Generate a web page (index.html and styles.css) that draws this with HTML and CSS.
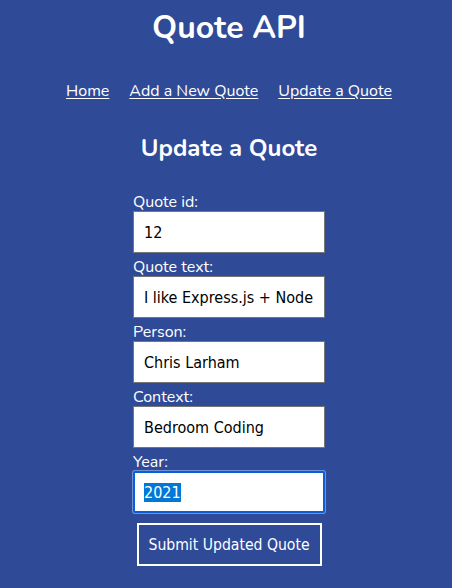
FILE: index.html
```html
<!DOCTYPE html>
<html lang="en">
<head>
<meta charset="utf-8">
<title>Quote API</title>
<link rel="stylesheet" href="styles.css">
</head>
<body>
<header class="header">
  <h1 class="title">Quote API</h1>
  <nav class="nav">
    <a href="#" class="nav-link">Home</a>
    <a href="#" class="nav-link">Add a New Quote</a>
    <a href="#" class="nav-link">Update a Quote</a>
  </nav>
</header>
<main class="main">
  <h2 class="subtitle">Update a Quote</h2>
  <form class="form">
    <label class="label" for="qid">Quote id:</label>
    <input class="input" id="qid" type="text" value="12">
    <label class="label" for="qtext">Quote text:</label>
    <input class="input" id="qtext" type="text" value="I like Express.js + Node">
    <label class="label" for="person">Person:</label>
    <input class="input" id="person" type="text" value="Chris Larham">
    <label class="label" for="context">Context:</label>
    <input class="input" id="context" type="text" value="Bedroom Coding">
    <label class="label" for="year">Year:</label>
    <input class="input input-focused" id="year" type="text" value="2021" autofocus>
    <button class="submit" type="button">Submit Updated Quote</button>
  </form>
</main>
<script src="script.js"></script>
</body>
</html>
```

FILE: styles.css
```css
html {
  margin: 0;
  padding: 0;
  background: #2f4a97;
}
body {
  margin: 0 0 0 6px;
  padding: 0;
  background: #2f4a97;
  color: #ffffff;
  font-family: "Nunito", "Lato", "Open Sans", sans-serif;
  width: 446px;
  height: 588px;
  overflow: hidden;
}
.header {
  display: flex;
  flex-direction: column;
  align-items: center;
}
.title {
  margin: 8px 0 0;
  font-size: 32px;
  font-weight: 700;
  line-height: 40px;
}
.nav {
  display: flex;
  gap: 20px;
  margin-top: 33px;
  font-size: 16px;
  line-height: 20px;
}
.nav-link {
  color: #ffffff;
  text-decoration: underline;
  text-underline-offset: 2px;
}
.main {
  display: flex;
  flex-direction: column;
  align-items: center;
}
.subtitle {
  margin: 31px 0 0;
  font-size: 24px;
  font-weight: 700;
  line-height: 32px;
}
.form {
  display: flex;
  flex-direction: column;
  width: 192px;
  margin-top: 29px;
}
.label {
  font-size: 16px;
  line-height: 18px;
  height: 18px;
}
.input + .label {
  margin-top: 5px;
}
.input {
  box-sizing: border-box;
  width: 192px;
  height: 42px;
  margin: 0;
  padding: 0 10px;
  border: 1px solid #767676;
  border-radius: 0;
  background: #ffffff;
  color: #000000;
  font-family: "DejaVu Sans Condensed", "DejaVu Sans", Tahoma, sans-serif;
  font-size: 16px;
  outline: none;
}
.input::selection {
  background: #0078d7;
  color: #ffffff;
}
.input-focused {
  border: 2px solid #0b5ed7;
  border-radius: 2px;
  padding: 0 9px;
  box-shadow: 0 0 0 1px #6f93d6;
}
.submit {
  align-self: center;
  box-sizing: border-box;
  width: 185px;
  height: 43px;
  margin-top: 10px;
  background: transparent;
  color: #ffffff;
  border: 2px solid #ffffff;
  border-radius: 0;
  font-family: "DejaVu Sans Condensed", "DejaVu Sans", Tahoma, sans-serif;
  font-size: 15.6px;
  padding: 0;
}
```

FILE: script.js
```js
var y = document.getElementById('year');
y.focus();
y.select();
```
